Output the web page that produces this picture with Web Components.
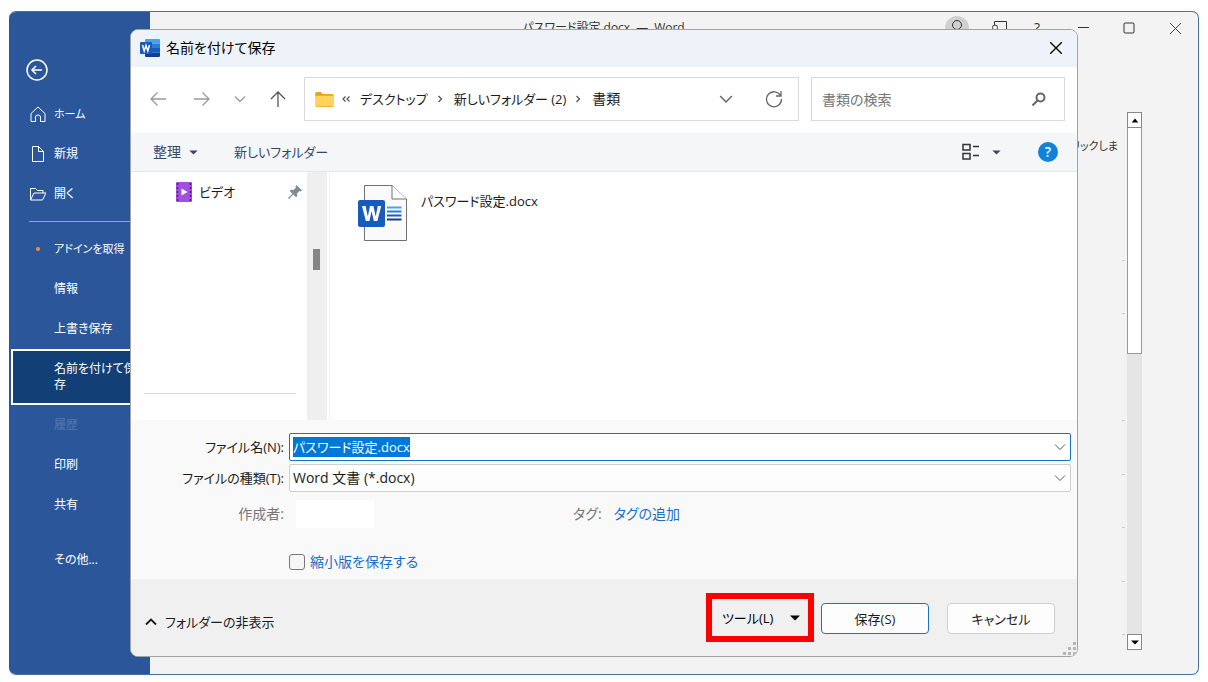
<!DOCTYPE html>
<html lang="ja">
<head>
<meta charset="utf-8">
<meta name="viewport" content="width=device-width, initial-scale=1">
<title>パスワード設定.docx — Word</title>
<style>
  html { background: #fff; }
  body {
    margin: 0; min-height: 100vh; box-sizing: border-box; padding: 11px 9px 7px;
    display: flex; font-family: "Open Sans", "Noto Sans CJK JP", sans-serif;
    font-feature-settings: "palt"; font-size: 14px; line-height: 20px; color: #1b1b1b;
  }
</style>
</head>
<body>
<word-window></word-window>

<script>
const ICONS = {
  back: ['0 0 22 22', '<circle cx="11" cy="11" r="10"/><path d="M16 11H6M10 7l-4 4 4 4"/>'],
  home: ['0 0 16 16', '<path d="M1 7.500 8 1l7 6.500V15.500h-4.500V11q0-2-2.500-2t-2.500 2v4.500H1z"/>'],
  page: ['0 0 16 16', '<path d="M2.500.5h6l5 5v10h-11zM8.500.5v5h5"/>'],
  open: ['0 0 16 16', '<path d="M.5 14V2.500h5l2 2H13V7M.5 14 4 7h12l-3.500 7z"/>'],
  left: ['0 0 16 16', '<path d="M16 8H1M7.500 1.500 1 8l6.500 6.500"/>'],
  right: ['0 0 16 16', '<path d="M0 8h15M8.500 1.500 15 8l-6.500 6.500"/>'],
  up: ['0 0 16 16', '<path d="M8 16V1M1 8l7-7 7 7"/>'],
  down: ['0 0 12 12', '<path d="m1 3.500 5 5 5-5"/>'],
  upc: ['0 0 12 12', '<path d="m1 8.500 5-5 5 5"/>'],
  crumb: ['0 0 12 12', '<path d="m4.500 3 3 3-3 3"/>'],
  crumbs: ['0 0 12 12', '<path d="M5.500 3.500 3 6l2.500 2.500M9.500 3.500 7 6l2.500 2.500"/>'],
  close: ['0 0 12 12', '<path d="m0 0 12 12M12 0 0 12"/>'],
  min: ['0 0 12 12', '<path d="M1 5.500h11"/>'],
  max: ['0 0 12 12', '<rect x="1" y="1" width="10" height="10" rx="1"/>'],
  refresh: ['0 0 18 18', '<path d="M15.500 5.500A7.500 7.500 0 1 0 16.500 9M16 1v5h-5"/>'],
  search: ['0 0 14 14', '<circle cx="8.500" cy="5.500" r="4"/><path d="M5.500 8.500.5 13.500"/>'],
  caret: ['0 0 10 6', '<path d="M0 .5h10L5 5.500z" fill="currentColor" stroke="none"/>'],
  tri: ['0 0 8 6', '<path d="M0 5.500h8L4 .5z" fill="currentColor" stroke="none"/>'],
  view: ['0 0 18 18', '<path d="M1 1.500h7v5.500H1zM1 10.500h7V16H1zM11 3.500h6M11 12.500h6"/>'],
  avatar: ['0 0 24 24', '<circle cx="12" cy="12" r="12" fill="#d0d0d0" stroke="none"/><circle cx="12" cy="9" r="4.500"/><path d="M5 20q0-6 7-6t7 6"/>'],
  share: ['0 0 16 16', '<path d="M3.500 5V1.500h12v8H12l-3 3M.5 15v-3q0-2.500 3.500-2.500T7.500 12v3M6.500 7.500a2.500 2.500 0 1 1-5 0 2.500 2.500 0 1 1 5 0"/>'],
  folder: ['0 0 20 16', '<path d="M0 2q0-2 2-2h4l2 2h10q2 0 2 2v2H0z" fill="#e8a417" stroke="none"/><rect y="4" width="20" height="12" rx="1" fill="#ffd35c" stroke="none"/><path d="M1 15.500h18" stroke="#f0b732"/>'],
  video: ['0 0 16 20', '<rect width="16" height="20" rx="1" fill="#a24fe0" stroke="none"/><path d="M1.500 1v18M14.500 1v18" stroke="#4d1a86" stroke-width="1.500" stroke-dasharray="2 2"/><path d="M5.500 6.500v7l6-3.500z" fill="#fff" stroke="none"/>'],
  pin: ['0 0 14 14', '<path d="m8.500 0 5.500 5.500-1.500 1-1-.5L9 8.500l.3 2.500L8 12.300 5.200 9.500 1 14 0 13l4.500-4.200L1.700 6 3 4.700l2.500.3L8 2.500l-.5-1z" fill="#7f8c99" stroke="none"/>'],
  word: ['0 0 20 18', '<path d="M5 1q0-1 1-1h13q1 0 1 1v3.500H5z" fill="#41a5ee" stroke="none"/><path d="M5 4.500h15V9H5z" fill="#2b7cd3" stroke="none"/><path d="M5 9h15v4.500H5z" fill="#185abd" stroke="none"/><path d="M5 13.500h15V17q0 1-1 1H6q-1 0-1-1z" fill="#103f91" stroke="none"/><rect y="3" width="12" height="12" rx="1" fill="#185abd" stroke="none"/><path d="m2.500 6 1.700 6L6 6.500 7.800 12l1.700-6" stroke="#fff" stroke-width="1.500"/>'],
  docx: ['0 0 49 56', '<path d="M6.500.5H34L48.500 14v41.500h-42z" fill="#fafafa" stroke="#707070"/><path d="M34 .5V14h14.500" fill="#fff" stroke="#707070"/><path d="M29 22.500h14.500" stroke="#41a5ee" stroke-width="2"/><path d="M29 26.500h14.500" stroke="#2b7cd3" stroke-width="2"/><path d="M29 30.500h14.500" stroke="#185abd" stroke-width="2"/><path d="M29 34.500h14.500" stroke="#103f91" stroke-width="2"/><rect y="15" width="27" height="27" rx="2" fill="#185abd" stroke="none"/><path d="M4 21h3.600l2.200 10.500L12 21h3.400l2.300 10.500L19.800 21h3.400l-3.800 15h-3.600l-2.200-9.800L11.400 36H7.800z" fill="#fff" stroke="none"/>'],
  grip: ['0 0 14 14', '<path d="M10 0h3v3h-3zM5 5h3v3H5zM10 5h3v3h-3zM0 10h3v3H0zM5 10h3v3H5zM10 10h3v3h-3z" fill="#b5b5b5" stroke="none"/>']
};

function define(name, markup, setup) {
  const tpl = document.createElement('template');
  tpl.innerHTML = markup;
  customElements.define(name, class extends HTMLElement {
    constructor() {
      super();
      this.attachShadow({ mode: 'open' }).append(tpl.content.cloneNode(true));
    }
    connectedCallback() { if (setup) setup(this, this.shadowRoot); }
  });
}

const RESET = `
  *, *::before { box-sizing: border-box; }
  button { font: inherit; font-feature-settings: inherit; color: inherit; background: none; border: 0; padding: 0; margin: 0;
           display: flex; align-items: center; justify-content: center; white-space: nowrap; }
  input, select { font: inherit; font-feature-settings: inherit; color: inherit; margin: 0; }
  a { color: inherit; text-decoration: none; }`;

/* <ui-icon name w h>: one stroke icon */
define('ui-icon', `<style>
  :host { display: inline-flex; flex: none; }
  svg { display: block; fill: none; stroke: currentColor; stroke-width: var(--stroke, 1); }
</style><svg aria-hidden="true"></svg>`, (host, root) => {
  const [box, body] = ICONS[host.getAttribute('name')];
  const [, , w, h] = box.split(' ');
  const svg = root.querySelector('svg');
  svg.setAttribute('viewBox', box);
  svg.setAttribute('width', host.getAttribute('w') || w);
  svg.setAttribute('height', host.getAttribute('h') || h);
  svg.innerHTML = body;
});

/* One entry of the backstage menu; "kana" is for labels set mostly in katakana */
define('nav-item', `<style>${RESET}
  :host { display: block; font-size: 12px; line-height: 16px; color: #fff; }
  :host([kana]) { font-size: 11px; }
  a { display: grid; grid-template-columns: 16px 1fr; column-gap: 8px; align-items: center;
      min-height: 40px; padding: 0 8px 0 21px; }
  .mark { display: flex; justify-content: center; }
  :host([current]) { padding-left: 2px; }
  :host([current]) a { min-height: 56px; padding-left: 17px; background: #123f76; border: 2px solid #fff; }
  :host([disabled]) a { color: #5578b0; }
</style><a href="#"><span class="mark"><slot name="mark"></slot></span><span><slot></slot></span></a>`);

define('backstage-menu', `<style>${RESET}
  :host { display: block; background: #2b579a; color: #fff; padding-top: 47px; }
  .back { width: 22px; height: 22px; margin: 0 0 13px 17px; --stroke: 1.500; }
  hr { border: 0; border-top: 1px solid #8aa6cf; margin: 7px 0 7px 20px; }
  .dot { width: 4px; height: 4px; border-radius: 50%; background: #f0962e; }
  .more { margin-top: 15px; }
</style>
<button class="back" aria-label="戻る"><ui-icon name="back"></ui-icon></button>
<nav>
  <nav-item kana><ui-icon slot="mark" name="home"></ui-icon>ホーム</nav-item>
  <nav-item><ui-icon slot="mark" name="page"></ui-icon>新規</nav-item>
  <nav-item><ui-icon slot="mark" name="open"></ui-icon>開く</nav-item>
  <hr>
  <nav-item kana><span slot="mark" class="dot"></span>アドインを取得</nav-item>
  <nav-item>情報</nav-item>
  <nav-item>上書き保存</nav-item>
  <nav-item current>名前を付けて保存</nav-item>
  <nav-item disabled>履歴</nav-item>
  <nav-item>印刷</nav-item>
  <nav-item>共有</nav-item>
  <nav-item class="more">その他...</nav-item>
</nav>`);

define('caption-bar', `<style>${RESET}
  :host { display: grid; grid-template-columns: 1fr auto 1fr; align-items: center; height: 32px;
          font-size: 12px; color: #333; }
  .tools { display: flex; justify-content: flex-end; align-items: center; }
  .tools button { width: 38px; height: 32px; }
  .tools .win { width: 46px; }
  .tools .gap { margin-right: 4px; }
  .help { font-size: 14px; }
  .title { grid-column: 2; }
</style>
<span class="title">パスワード設定.docx&ensp;—&ensp;Word</span>
<div class="tools">
  <button class="gap" aria-label="アカウント"><ui-icon name="avatar"></ui-icon></button>
  <button aria-label="共有"><ui-icon name="share"></ui-icon></button>
  <button class="help gap" aria-label="ヘルプ">?</button>
  <button class="win" aria-label="最小化"><ui-icon name="min"></ui-icon></button>
  <button class="win" aria-label="最大化"><ui-icon name="max"></ui-icon></button>
  <button class="win" aria-label="閉じる"><ui-icon name="close" w="11" h="11"></ui-icon></button>
</div>`);

define('scroll-rail', `<style>${RESET}
  :host { display: flex; flex-direction: column; width: 15px; background: #e5e5e5; color: #000; }
  button { height: 16px; background: #fff; border: 1px solid #888; flex: none; }
  .thumb { flex: 0 0 42%; background: #fff; border: 1px solid #999; border-top: 0; }
  .track { flex: 1; }
</style>
<button aria-label="上へ"><ui-icon name="tri" h="5"></ui-icon></button>
<div class="thumb"></div><div class="track"></div>
<button aria-label="下へ"><ui-icon name="caret" w="8" h="5"></ui-icon></button>`);

define('backstage-page', `<style>
  :host { display: flex; justify-content: flex-end; gap: 9px; padding: 68px 56px 24px 0; }
  .page { display: flex; flex-direction: column; align-items: flex-end; color: #333; font-size: 11px; }
  p { margin: 24px 0 104px; line-height: 20px; }
  .ticks { flex: 1; display: flex; flex-direction: column; justify-content: space-between; padding-bottom: 15px; margin-right: -7px; }
  .ticks i { width: 3px; height: 1px; background: #ccc; }
  .ticks .off { background: none; }
</style>
<div class="page"><p>リックしま</p>
<div class="ticks"><i></i><i></i><i class="off"></i><i></i><i></i><i></i><i></i><i></i></div></div>
<scroll-rail></scroll-rail>`);

define('path-bar', `<style>${RESET}
  :host { display: flex; align-items: center; height: 66px; padding: 0 12px 2px 19px; --stroke: 1.300; color: #555; }
  button { color: #999; height: 32px; }
  .go { width: 16px; margin-right: 28px; }
  .go.next { margin-right: 24px; }
  .go.more { width: 12px; margin-right: 24px; }
  .go.parent { color: #555; margin-right: 18px; }
  .address, .search { height: 44px; border: 1px solid #d9d9d9; background: #fff; display: flex; align-items: center; }
  .address { flex: 1; min-width: 0; padding: 0 15px 0 10px; }
  ol { display: flex; align-items: center; list-style: none; margin: 0; padding: 0; flex: 1; color: #1b1b1b; font-size: 13px; }
  li { display: flex; align-items: center; white-space: nowrap; }
  li:last-child { font-size: 14px; }
  li ui-icon { color: #555; margin: 0 8px 0 6px; }
  .drop { margin-right: 32px; color: #666; }
  .reload { color: #666; }
  .search { width: 254px; margin-left: 12px; padding: 0 18px 0 10px; }
  .search input { flex: 1; min-width: 0; border: 0; padding: 0; outline: 0; background: none; height: 24px; }
  .search input::placeholder { color: #757575; opacity: 1; }
  .search ui-icon { --stroke: 2; color: #666; }
</style>
<button class="go" aria-label="戻る"><ui-icon name="left"></ui-icon></button>
<button class="go next" aria-label="進む"><ui-icon name="right"></ui-icon></button>
<button class="go more" aria-label="最近の場所"><ui-icon name="down"></ui-icon></button>
<button class="go parent" aria-label="上の階層へ"><ui-icon name="up"></ui-icon></button>
<div class="address">
  <ui-icon name="folder" w="19" h="15"></ui-icon>
  <ol>
    <li><ui-icon name="crumbs"></ui-icon><a href="#">デスクトップ</a></li>
    <li><ui-icon name="crumb"></ui-icon><a href="#">新しいフォルダー (2)</a></li>
    <li><ui-icon name="crumb"></ui-icon><a href="#">書類</a></li>
  </ol>
  <button class="drop" aria-label="以前の場所"><ui-icon name="down" w="14" h="14"></ui-icon></button>
  <button class="reload" aria-label="更新"><ui-icon name="refresh"></ui-icon></button>
</div>
<div class="search"><input type="search" aria-label="書類の検索" placeholder="書類の検索"><ui-icon name="search"></ui-icon></div>`);

define('command-bar', `<style>${RESET}
  :host { display: flex; align-items: center; height: 39px; padding: 0 19px 0 22px; background: #f4f6f8;
          border-bottom: 1px solid #e6e8ea; color: #34496a; }
  .sort { gap: 8px; margin-right: 36px; }
  .new { font-size: 13px; }
  .view { gap: 12px; margin-left: auto; margin-right: 37px; }
  .view ui-icon:first-child { color: #333; --stroke: 1.500; }
  .help { width: 20px; height: 20px; border-radius: 50%; background: #0f83d8; color: #fff; font-weight: 600; }
</style>
<button class="sort">整理 <ui-icon name="caret" w="9" h="5"></ui-icon></button>
<button class="new">新しいフォルダー</button>
<button class="view" aria-label="表示の変更"><ui-icon name="view"></ui-icon><ui-icon name="caret" w="9" h="5"></ui-icon></button>
<button class="help" aria-label="ヘルプ">?</button>`);

define('file-browser', `<style>${RESET}
  :host { display: grid; grid-template-columns: 176px 20px 1fr; background: #fff; min-height: 160px; font-size: 13px; }
  .places { display: flex; flex-direction: column; justify-content: space-between; padding: 10px 5px 26px 13px; }
  .places a { display: flex; align-items: center; padding-left: 32px; gap: 7px; }
  .places a ui-icon:last-child { margin-left: auto; }
  hr { margin: 0 6px 0 0; border: 0; border-top: 1px solid #dcdcdc; }
  .rail { background: #efefef; padding: 77px 7px 0 6px; }
  .rail i { display: block; height: 21px; background: #858585; }
  .files { margin-left: 2px; border-left: 1px solid #f3f3f3; padding: 13px 28px; }
  .files a { display: inline-flex; gap: 14px; }
  .files span { padding-top: 6px; }
</style>
<div class="places">
  <a href="#"><ui-icon name="video"></ui-icon><span>ビデオ</span><ui-icon name="pin"></ui-icon></a>
  <hr>
</div>
<div class="rail"><i></i></div>
<div class="files"><a href="#"><ui-icon name="docx"></ui-icon><span>パスワード設定.docx</span></a></div>`);

define('save-form', `<style>${RESET}
  :host { display: grid; grid-template-columns: 153px 1fr; column-gap: 5px; align-content: start;
          background: #f9f9f9; padding: 13px 6px 6px 0; height: 159px; }
  .label { text-align: right; height: 28px; line-height: 28px; margin-bottom: 3px; white-space: nowrap; font-size: 13px; }
  .box { height: 28px; border: 1px solid #d0d0d0; background: #fdfdfd; border-radius: 2px;
         display: flex; align-items: center; padding: 0 3px; margin-bottom: 3px; }
  .box.name { border-color: #1a72c4; background: #fff; padding-right: 4px; font-size: 13px; }
  .box input { flex: 1; min-width: 0; height: 20px; line-height: 20px; border: 0; outline: 0; padding: 0; background: none; }
  .box input::selection { background: #0078d7; color: #fff; }
  .box.type { position: relative; padding: 0; }
  .box.type ui-icon { position: absolute; right: 4px; pointer-events: none; }
  select { appearance: none; width: 100%; height: 26px; border: 0; background: none; padding: 0 20px 0 3px; outline: 0; }
  .label.muted { color: #777; margin-top: 5px; font-size: 14px; }
  .meta { display: grid; grid-template-columns: 272px auto 1fr; column-gap: 12px; align-items: center; height: 28px; margin-top: 5px; color: #777; }
  .author { width: 78px; height: 28px; border: 0; background: #fff; margin-left: 7px; padding: 0 4px; }
  .meta a, .thumb { color: #1a6fc9; }
  .thumb { grid-column: 2; display: flex; align-items: center; gap: 5px; height: 28px; margin-top: 17px; }
  .thumb input { appearance: none; width: 16px; height: 16px; border: 1px solid #777; border-radius: 3px; background: #f6f6f6; }
  ui-icon { color: #555; }
</style>
<label class="label" for="name">ファイル名(N):</label>
<div class="box name"><input id="name" type="text" value="パスワード設定.docx"><button aria-label="候補"><ui-icon name="down"></ui-icon></button></div>
<label class="label" for="type">ファイルの種類(T):</label>
<div class="box type"><select id="type"><option>Word 文書 (*.docx)</option></select><ui-icon name="down"></ui-icon></div>
<label class="label muted" for="author">作成者:</label>
<div class="meta"><input class="author" id="author" type="text"><span>タグ:</span><a href="#">タグの追加</a></div>
<label class="thumb"><input type="checkbox">縮小版を保存する</label>`, (host, root) => {
  const field = root.getElementById('name');
  field.focus();
  field.select();
});

define('dialog-actions', `<style>${RESET}
  :host { display: flex; align-items: flex-start; height: 77px; padding: 14px 22px 0 14px; background: #f0f0f0; position: relative; font-size: 13px; }
  .hide { gap: 8px; height: 20px; margin: 19px auto 0 0; --stroke: 1.800; }
  .tools { width: 108px; height: 49px; border: 6px solid #f00; justify-content: space-between; padding: 0 8px 0 10px; color: #000; }
  .push { width: 108px; height: 31px; margin: 10px 0 0 18px; background: #fdfdfd; border: 1px solid #d0d0d0; border-radius: 4px; }
  .push.primary { margin-left: 7px; border-color: #1a72c4; }
  .grip { position: absolute; right: 0; bottom: 0; }
</style>
<button class="hide"><ui-icon name="upc"></ui-icon>フォルダーの非表示</button>
<button class="tools">ツール(L)<ui-icon name="caret"></ui-icon></button>
<button class="push primary">保存(S)</button>
<button class="push">キャンセル</button>
<ui-icon class="grip" name="grip"></ui-icon>`);

define('save-dialog', `<style>${RESET}
  :host { display: flex; flex-direction: column; background: #fff; border: 1px solid #a3a3a3; border-radius: 8px; overflow: hidden; }
  header { display: flex; align-items: center; gap: 6px; height: 37px; padding: 0 15px 1px 9px; background: #eef3f9; color: #000; }
  header button { margin-left: auto; --stroke: 1.300; }
  h1 { font: inherit; margin: 0; }
  file-browser { flex: 1; }
</style>
<header><ui-icon name="word"></ui-icon><h1>名前を付けて保存</h1><button aria-label="閉じる"><ui-icon name="close"></ui-icon></button></header>
<path-bar></path-bar>
<command-bar></command-bar>
<file-browser></file-browser>
<save-form></save-form>
<dialog-actions></dialog-actions>`);

define('word-window', `<style>
  :host { flex: 1; display: grid; grid-template: auto 1fr / 141px 1fr; position: relative; box-sizing: border-box;
          background: #f3f3f3; border: 1px solid #47709f; border-left: 0; border-radius: 7px; overflow: hidden; }
  backstage-menu { grid-area: 1 / 1 / 3 / 2; }
  caption-bar { grid-area: 1 / 1 / 2 / 3; }
  backstage-page { grid-area: 2 / 2; }
  save-dialog { position: absolute; inset: 17px 120px 17px 121px; }
</style>
<backstage-menu></backstage-menu>
<caption-bar></caption-bar>
<backstage-page></backstage-page>
<save-dialog role="dialog" aria-label="名前を付けて保存"></save-dialog>`);
</script>
</body>
</html>
